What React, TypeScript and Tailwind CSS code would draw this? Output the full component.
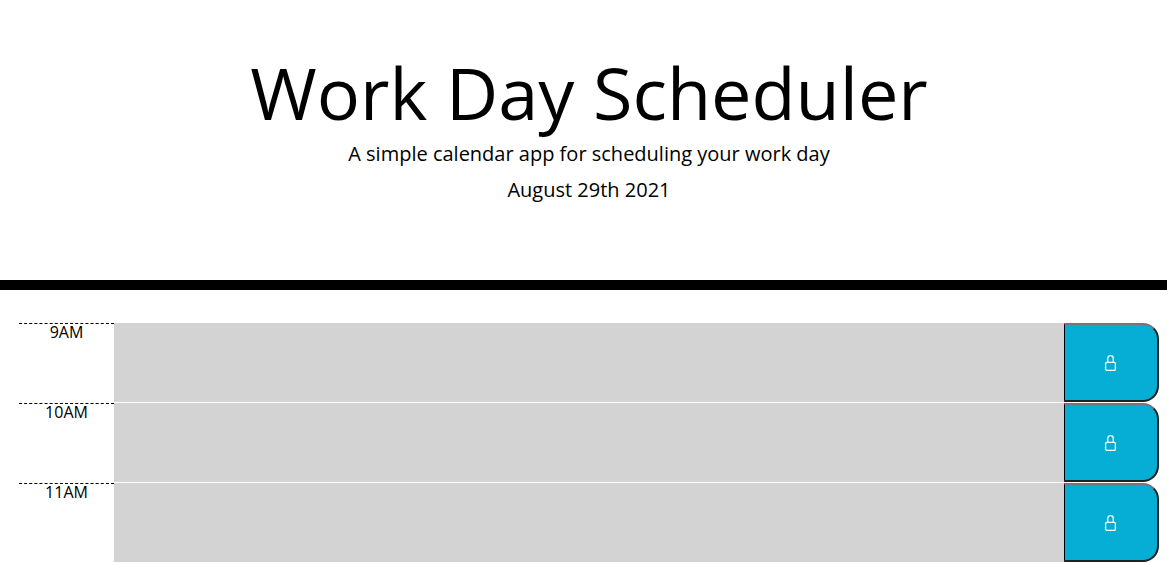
const hours = ["9AM", "10AM", "11AM"];

function LockIcon() {
  return (
    <svg width="16" height="16" viewBox="0 0 16 16" fill="none" stroke="white" strokeWidth="1.3" aria-hidden="true">
      <rect x="2.6" y="7.4" width="9.8" height="8" rx="1.2" />
      <path d="M4.7 7.4V3.5C4.7 1.7 5.8 0.7 7.5 0.7S10.3 1.7 10.3 3.5V7.4" />
    </svg>
  );
}

function TimeBlock({ hour }: { hour: string }) {
  const id = `event-${hour}`;
  return (
    <div className="grid h-[79px] grid-cols-12">
      <label
        htmlFor={id}
        className="border-t border-dashed border-black text-center text-base leading-4"
      >
        {hour}
      </label>
      <textarea
        id={id}
        className="col-span-10 block h-full w-full resize-none bg-[#d3d3d3] px-3 py-1 text-black outline-none"
      />
      <button
        type="button"
        aria-label={`Save ${hour}`}
        className="flex cursor-pointer items-center justify-center rounded-r-2xl border-2 border-l border-t-[#767676] border-r-[#212121] border-b-[#212121] border-l-black bg-[#06aed5]"
      >
        <LockIcon />
      </button>
    </div>
  );
}

export default function App() {
  return (
    <div className="min-h-screen bg-white font-['Open_Sans','Noto_Sans',sans-serif] font-normal text-black">
      <header className="border-b-10 border-black pt-12 pr-2 pb-[75px] pl-[19px] text-center">
        <h1 className="mb-[3px] text-[72px] leading-[88px]">Work Day Scheduler</h1>
        <p className="text-xl leading-[30px]">A simple calendar app for scheduling your work day</p>
        <p className="mt-1.5 text-xl leading-[30px]">August 29th 2021</p>
      </header>
      <main className="flex flex-col gap-px pt-[33px] pr-2 pl-[19px]">
        {hours.map((hour) => (
          <TimeBlock key={hour} hour={hour} />
        ))}
      </main>
    </div>
  );
}
